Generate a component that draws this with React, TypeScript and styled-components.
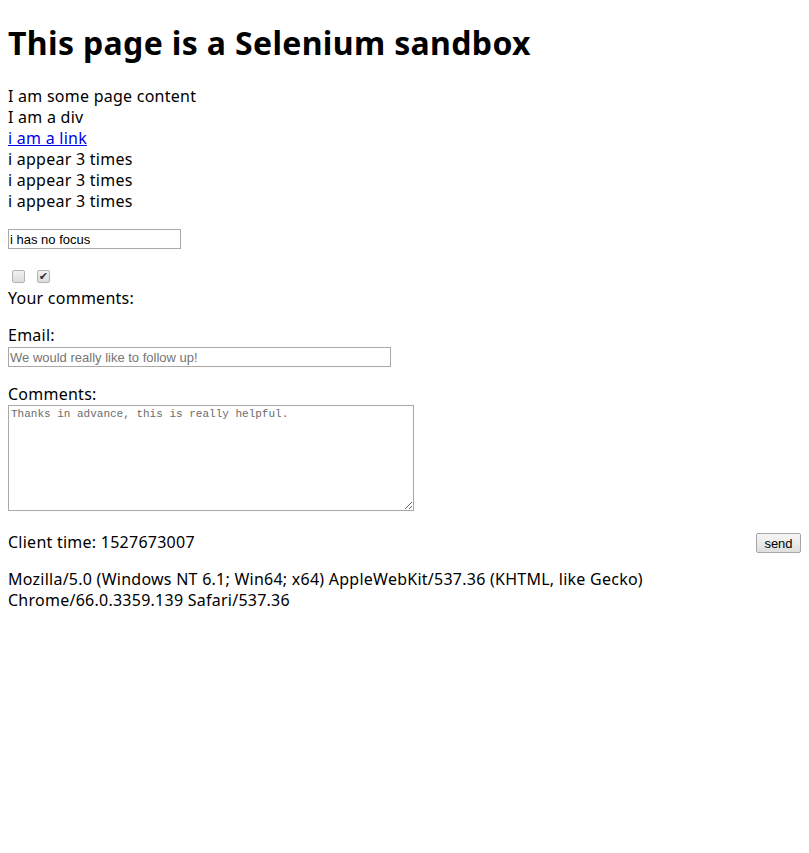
import React from "react";
import styled, { createGlobalStyle } from "styled-components";

const Global = createGlobalStyle`
  html, body { margin: 0; padding: 0; background: #fff; }
  body { font-family: "Noto Sans", "Open Sans", sans-serif; color: #000; }
`;

const Page = styled.div`
  padding: 0 8px;
  font-size: 16px;
  line-height: 21px;
  letter-spacing: 0.25px;
  display: flex;
  flex-direction: column;
  align-items: flex-start;
`;

const Title = styled.h1`
  margin: 22px 0 22px;
  font-size: 32px;
  line-height: 42px;
  font-weight: 700;
  letter-spacing: 0.35px;
`;

const Line = styled.div`
  height: 21px;
  white-space: nowrap;
`;

const Link = styled.a`
  color: #0000ee;
  text-decoration: underline;
  height: 21px;
`;

const TextInput = styled.input<{ $w: number; $mt: number }>`
  box-sizing: border-box;
  width: ${(p) => p.$w}px;
  height: 20px;
  margin: ${(p) => p.$mt}px 0 0;
  padding: 0 1px;
  border: 1px solid #a9a9a9;
  font-family: "Liberation Sans", Arial, sans-serif;
  font-size: 13px;
  letter-spacing: 0;
  color: #000;
  outline: none;
  &::placeholder { color: #757575; }
`;

const CheckRow = styled.div`
  display: flex;
  gap: 12px;
  margin: 21px 0 5px 4px;
`;

const Check = styled.span<{ $on?: boolean }>`
  box-sizing: border-box;
  width: 13px;
  height: 13px;
  border: 1px solid #b3b3b3;
  border-radius: 2px;
  background: linear-gradient(#f0f0f0, #dcdcdc);
  display: flex;
  align-items: center;
  justify-content: center;
  font-size: 11px;
  line-height: 11px;
  color: #333;
  font-family: "DejaVu Sans", sans-serif;
`;

const Label = styled.div<{ $mt: number }>`
  margin-top: ${(p) => p.$mt}px;
  height: 21px;
`;

const Area = styled.textarea`
  box-sizing: border-box;
  width: 406px;
  height: 106px;
  margin: 0;
  padding: 2px 2px;
  border: 1px solid #a9a9a9;
  font-family: "Liberation Mono", "Courier New", monospace;
  font-size: 11px;
  line-height: 13px;
  letter-spacing: 0;
  resize: both;
  outline: none;
  &::placeholder { color: #6b6b6b; }
`;

const TimeRow = styled.div`
  margin-top: 21px;
  align-self: stretch;
  display: flex;
  justify-content: space-between;
  align-items: flex-start;
  height: 21px;
`;

const Button = styled.button`
  box-sizing: border-box;
  margin-top: 1px;
  height: 20px;
  width: 45px;
  padding: 0;
  border: 1px solid #a6a6a6;
  border-radius: 2px;
  background: linear-gradient(#f6f6f6, #dedede);
  font-family: "Liberation Sans", Arial, sans-serif;
  font-size: 13px;
  letter-spacing: 0;
  color: #000;
`;

const Agent = styled.div`
  margin-top: 16px;
  width: 680px;
`;

export default function App() {
  return (
    <>
      <Global />
      <Page>
        <Title>This page is a Selenium sandbox</Title>
        <Line>I am some page content</Line>
        <Line>I am a div</Line>
        <Link href="#">i am a link</Link>
        <Line>i appear 3 times</Line>
        <Line>i appear 3 times</Line>
        <Line>i appear 3 times</Line>
        <TextInput $w={173} $mt={17} defaultValue="i has no focus" />
        <CheckRow>
          <Check />
          <Check $on>✔</Check>
        </CheckRow>
        <Line>Your comments:</Line>
        <Label $mt={16}>Email:</Label>
        <TextInput $w={383} $mt={1} placeholder="We would really like to follow up!" />
        <Label $mt={17}>Comments:</Label>
        <Area placeholder="Thanks in advance, this is really helpful." />
        <TimeRow>
          <span>Client time: 1527673007</span>
          <Button>send</Button>
        </TimeRow>
        <Agent>
          Mozilla/5.0 (Windows NT 6.1; Win64; x64) AppleWebKit/537.36 (KHTML, like Gecko) Chrome/66.0.3359.139 Safari/537.36
        </Agent>
      </Page>
    </>
  );
}
